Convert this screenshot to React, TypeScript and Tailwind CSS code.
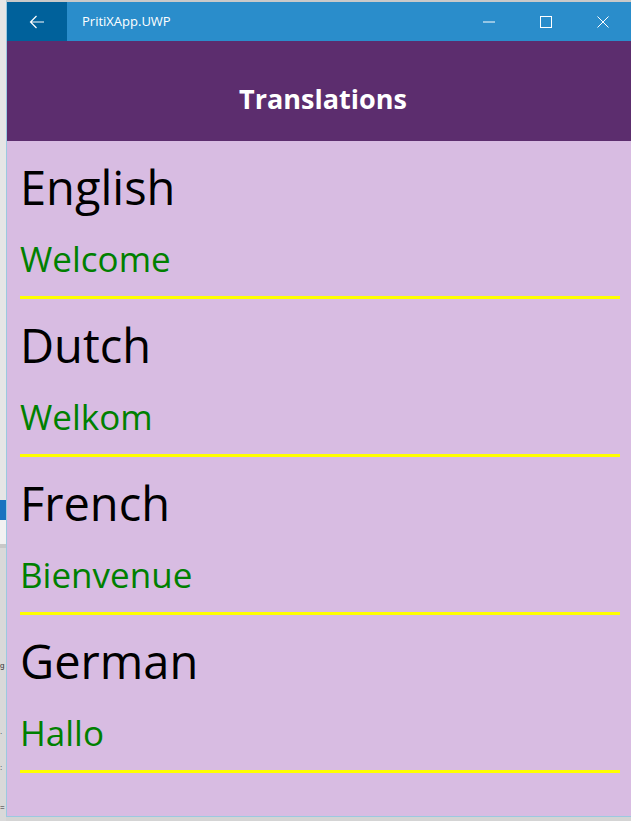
import React from "react";

interface Translation {
  language: string;
  text: string;
}

const translations: Translation[] = [
  { language: "English", text: "Welcome" },
  { language: "Dutch", text: "Welkom" },
  { language: "French", text: "Bienvenue" },
  { language: "German", text: "Hallo" },
];

const TitleBar = () => (
  <div className="flex h-[39px] bg-[#2a8dcb] text-white">
    <div className="flex w-[60px] items-center justify-center bg-[#00619b]">
      <svg width="16" height="14" viewBox="0 0 16 14" fill="none" stroke="white" strokeWidth="1.2">
        <path d="M15 7H1.5M7.5 1L1.5 7l6 6" />
      </svg>
    </div>
    <div className="flex flex-1 items-center pl-[15px] text-[13px]">PritiXApp.UWP</div>
    <div className="flex">
      <div className="flex w-[57px] items-center justify-center">
        <svg width="12" height="2" viewBox="0 0 12 2">
          <path d="M0 1h12" stroke="white" strokeWidth="1" />
        </svg>
      </div>
      <div className="flex w-[57px] items-center justify-center">
        <svg width="12" height="12" viewBox="0 0 12 12" fill="none">
          <rect x="0.5" y="0.5" width="11" height="11" stroke="white" strokeWidth="1" />
        </svg>
      </div>
      <div className="flex w-[57px] items-center justify-center">
        <svg width="12" height="12" viewBox="0 0 12 12" fill="none">
          <path d="M0.5 0.5l11 11M11.5 0.5l-11 11" stroke="white" strokeWidth="1" />
        </svg>
      </div>
    </div>
  </div>
);

const TranslationRow = ({ item }: { item: Translation }) => (
  <div className="flex flex-col pl-[13px] pr-[11px]">
    <div className="h-[75px] pt-[18px] text-[47px] leading-[57px] text-black">{item.language}</div>
    <div className="h-[80px] pt-[22px] text-[35px] leading-[42px] text-[#008000]">{item.text}</div>
    <div className="h-[3px] bg-[#ffff00]" />
  </div>
);

const Desktop = () => (
  <div className="flex w-[6px] flex-col bg-[#d9d9d9] text-[8px] leading-none text-[#333]">
    <div className="h-[500px] bg-[#e6e6e6]" />
    <div className="h-[20px] bg-[#1a73c0]" />
    <div className="h-[24px] bg-[#f2f2f2]" />
    <div className="h-[4px] bg-[#c8c8c8]" />
    <div className="h-[114px]" />
    <div className="font-['Liberation_Sans',sans-serif]">g</div>
    <div className="h-[58px]" />
    <div className="font-['Liberation_Sans',sans-serif]">.</div>
    <div className="h-[28px]" />
    <div className="font-['Liberation_Sans',sans-serif]">:</div>
    <div className="h-[32px]" />
    <div className="font-['Liberation_Sans',sans-serif]">=</div>
  </div>
);

const App = () => (
  <div className="flex h-[821px] w-[631px] overflow-hidden bg-[#d4d4d4] font-['Open_Sans',sans-serif]">
    <Desktop />
    <div className="flex h-[817px] flex-1 flex-col border-l border-t-2 border-b border-[#9cc9e0] border-t-[#c9c9c9] bg-[#d8bce2]">
      <TitleBar />
      <div className="flex h-[100px] items-center justify-center bg-[#5c2d6e] pl-[8px] pt-[16px] text-[27px] font-bold text-white">
        Translations
      </div>
      <div className="flex flex-col">
        {translations.map((t) => (
          <TranslationRow key={t.language} item={t} />
        ))}
      </div>
    </div>
  </div>
);

export default App;
